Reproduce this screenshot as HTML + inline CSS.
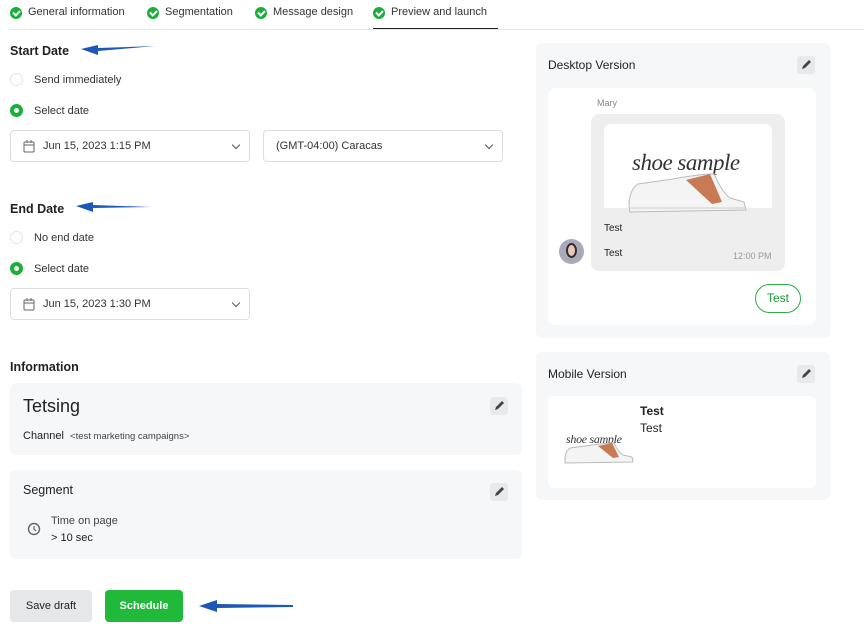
<!DOCTYPE html>
<html><head><meta charset="utf-8"><style>
*{box-sizing:border-box;margin:0;padding:0}
body{width:864px;height:639px;background:#fff;font-family:"Liberation Sans",sans-serif;color:#222;position:relative;overflow:hidden;font-size:11px}
.a{position:absolute}
.chk{position:absolute;width:12px;height:12px;border-radius:50%;background:#1cae3a}
.chk:after{content:"";position:absolute;left:3.5px;top:2px;width:3px;height:5px;border:solid #fff;border-width:0 2px 2px 0;transform:rotate(45deg)}
.tab{position:absolute;top:6px;font-size:11px;color:#333}
.h{position:absolute;font-size:12.5px;font-weight:bold;color:#222}
.r{position:absolute;width:13px;height:13px;border-radius:50%;border:1px solid #e4e4e4}
.rs{position:absolute;width:13px;height:13px;border-radius:50%;border:4px solid #1cae3a;background:#fff}
.lbl{position:absolute;font-size:11px;color:#333}
.sel{position:absolute;height:32px;border:1px solid #ddd;border-radius:4px;font-size:11px;color:#333;padding:9px 12px}
.car{position:absolute;right:10px;top:11px;width:6px;height:6px;border:solid #555;border-width:0 1.3px 1.3px 0;transform:rotate(45deg)}
.card{position:absolute;background:#f6f7f9;border-radius:6px}
.ed{position:absolute;width:18px;height:18px;background:#e8e9eb;border-radius:3px}
.arrow{position:absolute}
</style></head><body>
<div class="chk" style="left:10px;top:7px"></div><div class="tab" style="left:28px">General information</div>
<div class="chk" style="left:147px;top:7px"></div><div class="tab" style="left:165px">Segmentation</div>
<div class="chk" style="left:255px;top:7px"></div><div class="tab" style="left:273px">Message design</div>
<div class="chk" style="left:373px;top:7px"></div><div class="tab" style="left:391px">Preview and launch</div>
<div class="a" style="left:10px;top:29px;width:854px;height:1px;background:#e6e6e6"></div>
<div class="a" style="left:373px;top:28px;width:125px;height:1px;background:#222"></div>

<div class="h" style="left:10px;top:44px">Start Date</div>
<svg class="arrow" style="left:78px;top:39px" width="80" height="20"><path d="M77 7 L20 9 L20 6 L3 10 L20 16 L20 12 Z" fill="#1d57b8"/></svg>
<div class="r" style="left:10px;top:73px"></div><div class="lbl" style="left:34px;top:74px">Send immediately</div>
<div class="rs" style="left:10px;top:104px"></div><div class="lbl" style="left:34px;top:105px">Select date</div>
<div class="sel" style="left:10px;top:130px;width:240px"><svg style="position:absolute;left:12px;top:9px" width="12" height="13"><rect x="1" y="2" width="10" height="10" rx="1" fill="none" stroke="#666"/><path d="M1 5h10M4 0v3M8 0v3" stroke="#666"/></svg><span style="margin-left:20px">Jun 15, 2023 1:15 PM</span><div class="car"></div></div>
<div class="sel" style="left:263px;top:130px;width:240px">(GMT-04:00) Caracas<div class="car"></div></div>

<div class="h" style="left:10px;top:202px">End Date</div>
<svg class="arrow" style="left:73px;top:197px" width="80" height="20"><path d="M78 10 L20 8 L20 5 L3 9 L20 15 L20 11 Z" fill="#1d57b8"/></svg>
<div class="r" style="left:10px;top:231px"></div><div class="lbl" style="left:34px;top:232px">No end date</div>
<div class="rs" style="left:10px;top:262px"></div><div class="lbl" style="left:34px;top:263px">Select date</div>
<div class="sel" style="left:10px;top:288px;width:240px"><svg style="position:absolute;left:12px;top:9px" width="12" height="13"><rect x="1" y="2" width="10" height="10" rx="1" fill="none" stroke="#666"/><path d="M1 5h10M4 0v3M8 0v3" stroke="#666"/></svg><span style="margin-left:20px">Jun 15, 2023 1:30 PM</span><div class="car"></div></div>

<div class="h" style="left:10px;top:360px">Information</div>
<div class="card" style="left:10px;top:383px;width:512px;height:72px"></div>
<div class="a" style="left:23px;top:396px;font-size:18px;color:#222">Tetsing</div>
<div class="a" style="left:23px;top:430px;font-size:11px;color:#222">Channel <span style="font-size:9.5px;color:#444;margin-left:3px">&lt;test marketing campaigns&gt;</span></div>
<div class="ed" style="left:490px;top:397px"><svg width="18" height="18"><path d="M5 13l1-3 6-6 2 2-6 6z" fill="#444"/></svg></div>
<div class="card" style="left:10px;top:470px;width:512px;height:89px"></div>
<div class="a" style="left:23px;top:483px;font-size:12.5px;color:#222">Segment</div>
<div class="ed" style="left:490px;top:483px"><svg width="18" height="18"><path d="M5 13l1-3 6-6 2 2-6 6z" fill="#444"/></svg></div>
<svg class="a" style="left:27px;top:522px" width="14" height="14"><circle cx="7" cy="7" r="5.5" fill="none" stroke="#666" stroke-width="1.4"/><path d="M7 4v3l2 2" fill="none" stroke="#666" stroke-width="1.2"/></svg>
<div class="a" style="left:51px;top:515px;font-size:11px;color:#444">Time on page</div>
<div class="a" style="left:51px;top:532px;font-size:11px;color:#222">&gt; 10 sec</div>

<div class="a" style="left:10px;top:590px;width:82px;height:32px;background:#e6e7e9;border-radius:4px;font-size:11px;text-align:center;line-height:32px;color:#222">Save draft</div>
<div class="a" style="left:105px;top:590px;width:78px;height:32px;background:#20b93a;border-radius:4px;font-size:11px;font-weight:bold;text-align:center;line-height:32px;color:#fff">Schedule</div>
<svg class="arrow" style="left:195px;top:596px" width="100" height="20"><path d="M98 9 L22 8 L22 4 L4 10 L22 16 L22 12 L98 11 Z" fill="#1d57b8"/></svg>

<div class="card" style="left:536px;top:43px;width:294px;height:295px"></div>
<div class="a" style="left:548px;top:58px;font-size:12px;color:#222">Desktop Version</div>
<div class="ed" style="left:797px;top:56px"><svg width="18" height="18"><path d="M5 13l1-3 6-6 2 2-6 6z" fill="#444"/></svg></div>
<div class="a" style="left:548px;top:88px;width:268px;height:237px;background:#fff;border-radius:8px"></div>
<div class="a" style="left:597px;top:98px;font-size:9px;color:#888">Mary</div>
<div class="a" style="left:591px;top:114px;width:194px;height:157px;background:#eeeeef;border-radius:8px"></div>
<div class="a" style="left:604px;top:124px;width:168px;height:84px;background:#fff;border-radius:6px 6px 0 0"></div>
<div class="a" style="left:632px;top:150px;font-family:'Liberation Serif',serif;font-style:italic;font-size:23px;color:#333;letter-spacing:-0.5px">shoe sample</div>
<svg class="a" style="left:626px;top:172px" width="124" height="42"><path d="M3 34 C3 24 6 16 12 12 L40 8 C55 6 70 2 88 2 C92 10 96 20 104 26 L118 30 L120 38 L4 40 Z" fill="#f4f4f4" stroke="#bbb"/><path d="M60 8 L84 2 L96 30 L86 32 Z" fill="#c87a55"/><path d="M3 36 L120 36" stroke="#ccc"/></svg>
<div class="a" style="left:604px;top:223px;font-size:10px;color:#222">Test</div>
<div class="a" style="left:604px;top:248px;font-size:10px;color:#222">Test</div>
<div class="a" style="left:733px;top:251px;font-size:9px;color:#999">12:00 PM</div>
<div class="a" style="left:559px;top:239px;width:25px;height:25px;border-radius:50%;background:#a8aabc"><div style="position:absolute;left:7px;top:4px;width:11px;height:15px;border-radius:50%;background:#e8c8b8;border:2px solid #3a2a2a"></div></div>
<div class="a" style="left:755px;top:284px;width:46px;height:29px;border:1px solid #2bae45;border-radius:15px;font-size:12px;color:#1a9a33;text-align:center;line-height:27px">Test</div>

<div class="card" style="left:536px;top:352px;width:294px;height:148px"></div>
<div class="a" style="left:548px;top:367px;font-size:12px;color:#222">Mobile Version</div>
<div class="ed" style="left:797px;top:365px"><svg width="18" height="18"><path d="M5 13l1-3 6-6 2 2-6 6z" fill="#444"/></svg></div>
<div class="a" style="left:548px;top:396px;width:268px;height:92px;background:#fff;border-radius:6px"></div>
<div class="a" style="left:566px;top:432px;font-family:'Liberation Serif',serif;font-style:italic;font-size:12px;color:#333;letter-spacing:-0.3px">shoe sample</div>
<svg class="a" style="left:563px;top:442px" width="72" height="22"><path d="M2 18 C2 12 4 8 7 6 L22 4 C30 3 40 1 51 1 C53 5 55 10 60 13 L69 15 L70 20 L2 21 Z" fill="#f4f4f4" stroke="#bbb"/><path d="M35 4 L49 1 L56 15 L50 16 Z" fill="#c87a55"/></svg>
<div class="a" style="left:640px;top:404px;font-size:12px;font-weight:bold;color:#222">Test</div>
<div class="a" style="left:640px;top:421px;font-size:12px;color:#222">Test</div>
</body></html>
